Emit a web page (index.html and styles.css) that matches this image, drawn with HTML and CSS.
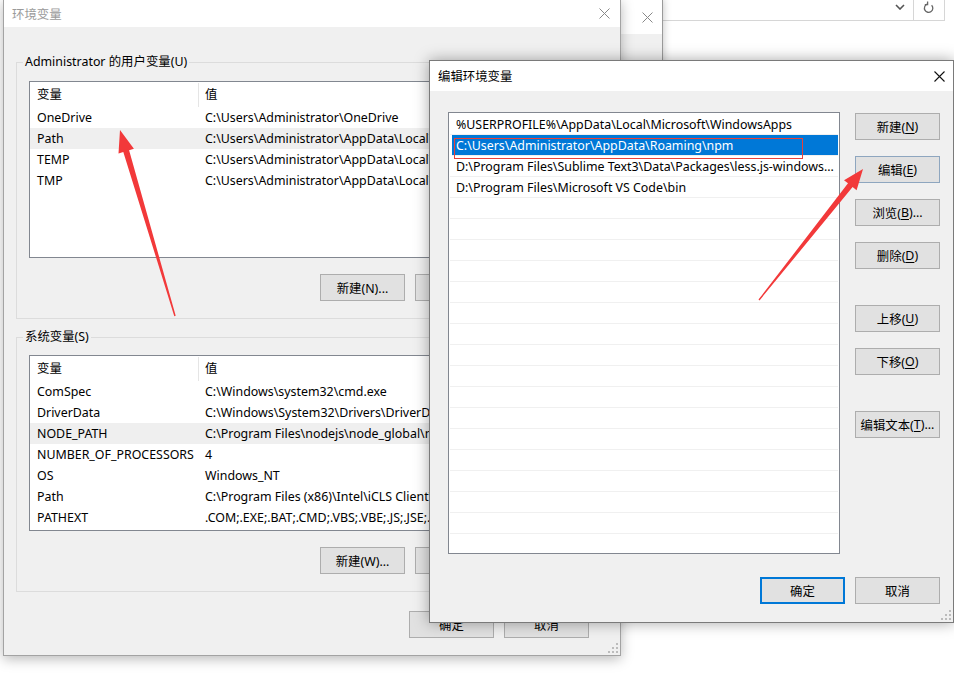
FILE: index.html
```html
<!DOCTYPE html>
<html lang="zh-CN">
<head>
<meta charset="utf-8">
<title>环境变量</title>
<link rel="stylesheet" href="styles.css">
</head>
<body>
<div class="desktop">

  <div class="browser">
    <div class="addr">
      <span class="chev"><svg width="10" height="6" viewBox="0 0 10 6"><path d="M1 1 L5 5 L9 1" fill="none" stroke="#555" stroke-width="1.6"/></svg></span>
      <span class="addr-sep"></span>
      <span class="refresh"><svg width="12" height="14" viewBox="0 0 12 14"><path d="M8.6 5.2 A4.2 4.2 0 1 1 4.2 4.2" fill="none" stroke="#666" stroke-width="1.3"/><path d="M4.6 1.6 L4.6 4.6 L1.8 4.6" fill="none" stroke="#666" stroke-width="1.3"/></svg></span>
    </div>
  </div>

  <div class="win small-win">
    <div class="titlebar small-title">
      <span class="close close-gray"><svg width="11" height="11" viewBox="0 0 11 11"><path d="M0.5 0.5 L10.5 10.5 M10.5 0.5 L0.5 10.5" stroke="#888" stroke-width="1"/></svg></span>
    </div>
    <div class="winbody"></div>
  </div>

  <div class="win main-win">
    <div class="titlebar main-title">
      <span class="title inactive">环境变量</span>
      <span class="close main-close"><svg width="11" height="11" viewBox="0 0 11 11"><path d="M0.5 0.5 L10.5 10.5 M10.5 0.5 L0.5 10.5" stroke="#888" stroke-width="1"/></svg></span>
    </div>
    <div class="winbody main-body">
      <fieldset class="group group-user">
        <legend>Administrator 的用户变量(U)</legend>
        <div class="vlist vlist-user">
          <div class="vrow vhead"><span class="c1">变量</span><span class="c2 sep">值</span></div>
          <div class="vrow"><span class="c1">OneDrive</span><span class="c2">C:\Users\Administrator\OneDrive</span></div>
          <div class="vrow hl"><span class="c1">Path</span><span class="c2">C:\Users\Administrator\AppData\Local\Microsoft\WindowsApps;</span></div>
          <div class="vrow"><span class="c1">TEMP</span><span class="c2">C:\Users\Administrator\AppData\Local\Temp</span></div>
          <div class="vrow"><span class="c1">TMP</span><span class="c2">C:\Users\Administrator\AppData\Local\Temp</span></div>
        </div>
        <div class="btnrow">
          <span class="btn">新建(N)...</span>
          <span class="btn">编辑(E)...</span>
          <span class="btn">删除(D)</span>
        </div>
      </fieldset>

      <fieldset class="group group-sys">
        <legend>系统变量(S)</legend>
        <div class="vlist vlist-sys">
          <div class="vrow vhead"><span class="c1">变量</span><span class="c2 sep">值</span></div>
          <div class="vrow"><span class="c1">ComSpec</span><span class="c2">C:\Windows\system32\cmd.exe</span></div>
          <div class="vrow"><span class="c1">DriverData</span><span class="c2">C:\Windows\System32\Drivers\DriverData</span></div>
          <div class="vrow hl"><span class="c1">NODE_PATH</span><span class="c2">C:\Program Files\nodejs\node_global\node_modules</span></div>
          <div class="vrow"><span class="c1">NUMBER_OF_PROCESSORS</span><span class="c2">4</span></div>
          <div class="vrow"><span class="c1">OS</span><span class="c2">Windows_NT</span></div>
          <div class="vrow"><span class="c1">Path</span><span class="c2">C:\Program Files (x86)\Intel\iCLS Client\;C:\Program Files\Intel</span></div>
          <div class="vrow"><span class="c1">PATHEXT</span><span class="c2">.COM;.EXE;.BAT;.CMD;.VBS;.VBE;.JS;.JSE;.WSF;.WSH;.MSC</span></div>
        </div>
        <div class="btnrow">
          <span class="btn">新建(W)...</span>
          <span class="btn">编辑(I)...</span>
          <span class="btn">删除(L)</span>
        </div>
      </fieldset>

      <div class="footer main-footer">
        <span class="btn">确定</span>
        <span class="btn">取消</span>
      </div>
    </div>
    <svg class="grip" width="10" height="10" viewBox="0 0 10 10"><g fill="#bcbcbc"><rect x="8" y="0" width="2" height="2"/><rect x="4" y="4" width="2" height="2"/><rect x="8" y="4" width="2" height="2"/><rect x="0" y="8" width="2" height="2"/><rect x="4" y="8" width="2" height="2"/><rect x="8" y="8" width="2" height="2"/></g></svg>
  </div>

  <div class="win edit-win">
    <div class="titlebar edit-title">
      <span class="title">编辑环境变量</span>
      <span class="close edit-close"><svg width="11" height="11" viewBox="0 0 11 11"><path d="M0.5 0.5 L10.5 10.5 M10.5 0.5 L0.5 10.5" stroke="#111" stroke-width="1.1"/></svg></span>
    </div>
    <div class="winbody edit-body">
      <div class="plist">
        <div class="prow">%USERPROFILE%\AppData\Local\Microsoft\WindowsApps</div>
        <div class="prow sel">C:\Users\Administrator\AppData\Roaming\npm<span class="mark"></span></div>
        <div class="prow clip">D:\Program Files\Sublime Text3\Data\Packages\less.js-windows...</div>
        <div class="prow">D:\Program Files\Microsoft VS Code\bin</div>
        <div class="prow"></div><div class="prow"></div><div class="prow"></div><div class="prow"></div>
        <div class="prow"></div><div class="prow"></div><div class="prow"></div><div class="prow"></div>
        <div class="prow"></div><div class="prow"></div><div class="prow"></div><div class="prow"></div>
        <div class="prow"></div><div class="prow"></div><div class="prow"></div><div class="prow"></div>
        <div class="prow"></div>
      </div>
      <div class="sidebtns">
        <span class="btn">新建(<u>N</u>)</span>
        <span class="btn hover">编辑(<u>E</u>)</span>
        <span class="btn">浏览(<u>B</u>)...</span>
        <span class="btn">删除(<u>D</u>)</span>
        <span class="btn spaced">上移(<u>U</u>)</span>
        <span class="btn">下移(<u>O</u>)</span>
        <span class="btn spaced">编辑文本(<u>T</u>)...</span>
      </div>
      <div class="footer edit-footer">
        <span class="btn default">确定</span>
        <span class="btn">取消</span>
      </div>
    </div>
    <svg class="grip" width="10" height="10" viewBox="0 0 10 10"><g fill="#bcbcbc"><rect x="8" y="0" width="2" height="2"/><rect x="4" y="4" width="2" height="2"/><rect x="8" y="4" width="2" height="2"/><rect x="0" y="8" width="2" height="2"/><rect x="4" y="8" width="2" height="2"/><rect x="8" y="8" width="2" height="2"/></g></svg>
  </div>

  <svg class="arrows" width="954" height="690" viewBox="0 0 954 690">
    <polygon fill="#f2393a" points="120,130 133.9,148.8 129.1,150.3 175.7,315.8 174.3,316.2 123.3,152 118.5,153.4"/>
    <polygon fill="#f2393a" points="863,169 856.6,190.2 852.6,187.1 759.5,300.4 758.5,299.6 848,183.3 844,180.2"/>
  </svg>
</div>
</body>
</html>
```

FILE: styles.css
```css
* { box-sizing: border-box; }

html, body {
  margin: 0;
  padding: 0;
  background: #ffffff;
}

body {
  font-family: "Noto Sans", "Noto Sans CJK SC", sans-serif;
  font-size: 12.4px;
  color: #000;
}

.desktop {
  position: relative;
  width: 954px;
  height: 690px;
  overflow: hidden;
  background: #ffffff;
}

/* background browser */
.browser {
  position: absolute;
  left: 620px;
  top: 0;
  width: 334px;
  height: 120px;
  background: #fff;
}

.addr {
  margin-left: 20px;
  width: 305px;
  height: 21px;
  border: 1px solid #d6d6d6;
  border-top: none;
  display: flex;
  justify-content: flex-end;
  align-items: stretch;
}

.chev {
  width: 26px;
  display: flex;
  align-items: center;
  justify-content: center;
  padding-bottom: 6px;
}

.addr-sep {
  width: 1px;
  background: #d6d6d6;
}

.refresh {
  width: 30px;
  display: flex;
  justify-content: center;
}

/* generic window */
.win {
  position: absolute;
  background: #f0f0f0;
  display: flex;
  flex-direction: column;
}

.titlebar {
  background: #fff;
  display: flex;
  align-items: center;
  justify-content: space-between;
  flex: none;
}

.title {
  white-space: nowrap;
}

.title.inactive {
  color: #9a9a9a;
}

.close {
  display: flex;
  align-items: center;
  justify-content: center;
}

.winbody {
  flex: 1;
}

.grip {
  position: absolute;
  right: 2px;
  bottom: 2px;
}

/* small window behind */
.small-win {
  left: 620px;
  top: -1px;
  width: 43px;
  height: 120px;
  border: 1px solid #9a9a9a;
  box-shadow: 0 0 8px rgba(0,0,0,0.25);
}

.small-title {
  height: 34px;
  justify-content: flex-end;
}

.close-gray {
  width: 30px;
}

/* main window */
.main-win {
  left: 3px;
  top: -1px;
  width: 618px;
  height: 657px;
  border: 1px solid #a3a3a3;
  box-shadow: 0 3px 12px rgba(0,0,0,0.28);
}

.main-title {
  height: 27px;
  padding-left: 8px;
}

.main-close {
  width: 32px;
  height: 27px;
}

.main-body {
  padding: 27px 12px 0 12px;
}

.group {
  margin: 0;
  border: 1px solid #dcdcdc;
  padding: 11px 12px 17px 12px;
  min-width: 0;
}

.group legend {
  padding: 0 2px;
  margin-left: -6px;
  line-height: 16px;
}

.group-sys {
  margin-top: 10px;
  padding-top: 10px;
}

.vlist {
  background: #fff;
  border: 1px solid #828790;
  overflow: hidden;
}

.vlist-user { height: 177px; }
.vlist-sys { height: 176px; }

.vrow {
  display: grid;
  grid-template-columns: 168px 1fr;
  height: 21px;
  line-height: 21px;
  white-space: nowrap;
}

.vrow.vhead {
  height: 25px;
  line-height: 25px;
}

.vrow .c1 {
  padding-left: 7px;
  overflow: hidden;
}

.vrow .c2 {
  padding-left: 7px;
  overflow: hidden;
}

.vrow .c2.sep {
  border-left: 1px solid #e5e5e5;
  padding-left: 6px;
  margin-top: 1px;
  line-height: 23px;
}

.vrow.hl {
  background: #efefef;
}

.btnrow {
  display: flex;
  justify-content: flex-end;
  gap: 10px;
  margin-top: 16px;
}

.btn {
  width: 85px;
  height: 27px;
  border: 1px solid #adadad;
  background: #e1e1e1;
  display: flex;
  align-items: center;
  justify-content: center;
  white-space: nowrap;
  flex: none;
}

.btn u {
  text-decoration: underline;
  text-underline-offset: 2px;
}

.btn.hover {
  border-color: #8ea6bf;
}

.btn.default {
  border: 2px solid #0078d7;
}

.footer {
  display: flex;
  justify-content: flex-end;
  gap: 10px;
}

.main-footer {
  margin-top: 19px;
  padding-right: 19px;
}

/* edit dialog */
.edit-win {
  left: 429px;
  top: 60px;
  width: 525px;
  height: 563px;
  border: 1px solid #7a7a7a;
  box-shadow: 0 0 14px rgba(0,0,0,0.35);
}

.edit-title {
  height: 30px;
  padding-left: 8px;
}

.edit-close {
  width: 28px;
  height: 30px;
}

.edit-body {
  padding: 21px 12px 0 18px;
  display: grid;
  grid-template-columns: 392px 85px;
  grid-template-rows: 442px auto;
  column-gap: 15px;
}

.plist {
  background: #fff;
  border: 1px solid #828790;
  padding: 1px 1px 0 1px;
  overflow: hidden;
}

.prow {
  position: relative;
  height: 21px;
  line-height: 21px;
  border-bottom: 1px solid #f0f0f0;
  padding-left: 6px;
  white-space: nowrap;
}

.prow.clip {
  overflow: hidden;
  text-overflow: ellipsis;
  padding-right: 2px;
}

.prow.sel {
  background: #0078d7;
  color: #fff;
  margin-left: 2px;
  padding-left: 4px;
}

.prow .mark {
  position: absolute;
  left: 2px;
  top: 3px;
  width: 349px;
  height: 21px;
  border: 1px solid #e8403a;
}

.sidebtns {
  display: flex;
  flex-direction: column;
  gap: 16px;
  margin-top: 1px;
}

.sidebtns .spaced {
  margin-top: 20px;
}

.edit-footer {
  grid-column: 1 / 3;
  margin-top: 23px;
}

.arrows {
  position: absolute;
  left: 0;
  top: 0;
  pointer-events: none;
}
```
